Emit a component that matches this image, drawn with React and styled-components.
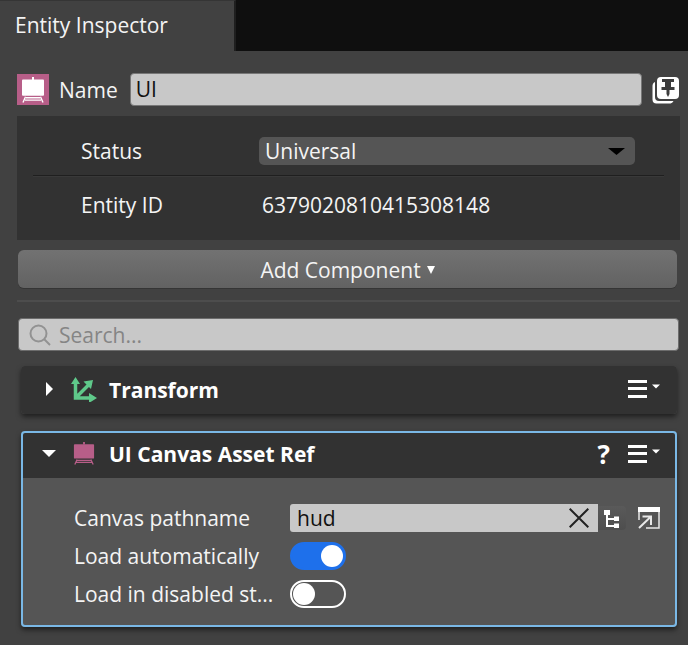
import React, { useState } from "react";
import styled, { createGlobalStyle, css } from "styled-components";

const GlobalStyle = createGlobalStyle`
  *, *::before, *::after { box-sizing: border-box; }
  html, body { margin: 0; min-height: 100%; background: #414141; }
  body, input, select, button {
    font-family: "Open Sans", "Noto Sans", sans-serif;
    font-size: 21px;
    line-height: 28px;
    color: #f4f4f4;
  }
  button { padding: 0; border: 0; background: none; cursor: pointer; }
  svg { display: block; flex: none; }
`;

const TabBar = styled.div`
  display: flex;
  height: 51px;
  background: #0f0f0f;
`;

const Tab = styled.button`
  width: 236px;
  padding: 0 15px 2px;
  text-align: left;
  background: #414141;
  border-top: 1px solid #353535;
  border-right: 2px solid #1f1f1f;
`;

const Panel = styled.main`
  padding: 22px 8px 16px 17px;
`;

const NameRow = styled.div`
  display: flex;
  align-items: center;
  height: 33px;
`;

const EntityIcon = styled.span`
  display: flex;
  align-items: center;
  justify-content: center;
  width: 32px;
  height: 31px;
  background: #b75e88;
`;

const NameLabel = styled.label`
  margin: 0 12px 0 10px;
`;

const NameInput = styled.input`
  flex: 1;
  min-width: 0;
  height: 33px;
  padding: 0 5px 1px;
  color: #111;
  background: #c8c8c8;
  border: 1px solid #777;
  border-radius: 4px;
`;

const PinButton = styled.button`
  margin-left: 10px;
  margin-right: 1px;
  padding-top: 2px;
`;

const StatusPanel = styled.section`
  margin-top: 10px;
  padding: 12px 16px 0;
  height: 124px;
  background: #323232;
`;

const StatusRow = styled.div`
  display: grid;
  grid-template-columns: 178px 1fr;
  align-items: center;
  height: 47px;
  padding: 0 29px 2px 48px;
  & + & {
    height: 58px;
    padding-bottom: 0;
    border-top: 1px solid #1f1f1f;
    box-shadow: inset 0 1px #393939;
  }
`;

const SelectBox = styled.div`
  position: relative;
  svg {
    position: absolute;
    right: 10px;
    top: 11px;
    pointer-events: none;
  }
`;

const StatusSelect = styled.select`
  display: block;
  appearance: none;
  width: 100%;
  height: 28px;
  padding: 0 6px;
  background: #555;
  border: 0;
  border-radius: 5px;
`;

const EntityId = styled.output`
  padding-left: 3px;
`;

const AddButton = styled.button`
  display: flex;
  align-items: center;
  justify-content: center;
  gap: 6px;
  width: calc(100% - 4px);
  height: 38px;
  margin: 10px 0 0 1px;
  padding-top: 2px;
  background: linear-gradient(#727272, #626262);
  border-radius: 6px;
  box-shadow: 0 1px #353535;
`;

const Divider = styled.hr`
  height: 2px;
  margin: 12px 0 0;
  background: #4d4d4d;
  border: 0;
`;

const SearchBox = styled.label`
  display: flex;
  align-items: center;
  gap: 8px;
  height: 33px;
  margin: 16px 1px 0;
  padding: 0 10px;
  color: #929292;
  background: #c8c8c8;
  border: 1px solid #6c6c6c;
  border-radius: 4px;
`;

const SearchInput = styled.input`
  flex: 1;
  min-width: 0;
  padding: 0;
  color: #111;
  background: none;
  border: 0;
  outline: 0;
  &::placeholder { color: #858585; opacity: 1; }
`;

const Card = styled.section`
  margin: 15px 3px 0 4px;
  background: #555;
  border-radius: 4px;
  box-shadow: 0 3px 5px rgba(0, 0, 0, 0.5);
  overflow: hidden;
  & + & { margin-top: 17px; }
  ${({ $selected }) => $selected && css`
    outline: 2px solid #7ab8e6;
    outline-offset: -2px;
  `}
`;

const CardHeader = styled.header`
  display: flex;
  align-items: center;
  height: ${({ $open }) => ($open ? 47 : 48)}px;
  padding: 0 17px 2px 20px;
  background: #323232;
  ${({ $open }) => $open && css`margin: 0 2px; padding: 0 15px 2px 18px;`}
`;

const FoldButton = styled.button`
  display: flex;
  justify-content: center;
  width: 16px;
`;

const CardIcon = styled.span`
  display: flex;
  justify-content: center;
  width: 26px;
  margin: 0 12px 0 14px;
`;

const CardTitle = styled.h2`
  flex: 1;
  margin: 0;
  padding-top: 1px;
  font-size: 21px;
  font-weight: 700;
  line-height: 28px;
  color: #fff;
`;

const HelpButton = styled.button`
  margin-right: 18px;
  font-size: 26px;
  font-weight: 700;
  color: #fff;
`;

const CardBody = styled.div`
  display: grid;
  grid-template-columns: 204px 1fr;
  align-items: center;
  gap: 10px 12px;
  padding: 26px 20px 19px 53px;
`;

const FieldLabel = styled.label`
  white-space: nowrap;
`;

const AssetField = styled.div`
  display: flex;
  align-items: center;
  height: 28px;
`;

const AssetBox = styled.div`
  display: flex;
  flex: 1;
  min-width: 0;
  height: 28px;
  padding-right: 9px;
  background: #c8c8c8;
  border-radius: 3px 0 0 3px;
`;

const AssetInput = styled.input`
  flex: 1;
  min-width: 0;
  padding: 0 7px;
  color: #111;
  background: none;
  border: 0;
`;

const TreeButton = styled.button`
  display: flex;
  justify-content: center;
  width: 28px;
  height: 24px;
  padding-top: 4px;
  background: linear-gradient(#5a5a5a, #4e4e4e);
  border-radius: 0 4px 4px 0;
`;

const OpenButton = styled.button`
  margin-left: 12px;
`;

const Toggle = styled.input`
  appearance: none;
  display: flex;
  align-items: center;
  width: 56px;
  height: 28px;
  margin: 0;
  padding: 0 1px;
  border: 2px solid #fff;
  border-radius: 14px;
  &::before {
    content: "";
    width: 22px;
    height: 22px;
    background: #fff;
    border-radius: 50%;
  }
  &:checked {
    justify-content: flex-end;
    background: #1e70eb;
    border-color: #1e70eb;
  }
`;

const CanvasIcon = ({ color, width, height }) => (
  <svg width={width} height={height} viewBox="0 0 24 27" preserveAspectRatio="none" fill="none" stroke={color}>
    <path d="M12 0v3" strokeWidth="2" />
    <rect x="1" y="2.500" width="22" height="17" rx="1" fill={color} stroke="none" />
    <path d="M5 21.500h14M4 24h16M4.500 20.500l-2.500 6M19.500 20.500l2.500 6" strokeWidth="1.400" />
  </svg>
);

const PinIcon = () => (
  <svg width="27" height="27" viewBox="0 0 27 27">
    <path d="M3 5C1 6 .5 7.500 .5 9v13.500a4 4 0 0 0 4 4H17c2 0 3.500-.5 4.500-2.500H7a4 4 0 0 1-4-4z" fill="#fff" />
    <rect x="5" y="0" width="22" height="22" rx="4" fill="#fff" />
    <path d="M10 2h12v3h-3v5h3.500v3h-5v4L16 20l-1.500-3v-4h-5v-3H13V5h-3z" fill="#3d3d3d" />
  </svg>
);

const Caret = ({ color = "#fff", width = 14, height = 7 }) => (
  <svg width={width} height={height} viewBox="0 0 14 7" preserveAspectRatio="none">
    <path d="M0 0h14L7 7z" fill={color} />
  </svg>
);

const SearchIcon = () => (
  <svg width="22" height="22" viewBox="0 0 22 22" fill="none" stroke="#929292" strokeWidth="2">
    <circle cx="9.500" cy="9.500" r="8" />
    <path d="M15 15l6 6" />
  </svg>
);

const TransformIcon = () => (
  <svg width="26" height="26" viewBox="0 0 26 26" fill="#5fc98a">
    <path d="M0 8L4.500 1 9 8zM18 17l8 5-8 5zM12.500 5.500L22 4l-2 9z" />
    <path d="M4.500 7v15H19M4.500 22L18 8.500" fill="none" stroke="#5fc98a" strokeWidth="3.500" />
  </svg>
);

const MenuIcon = () => (
  <svg width="32" height="18" viewBox="0 0 32 18" fill="#fff">
    <path d="M0 0h19v3H0zM0 7h19v3H0zM0 15h19v3H0zM24 4.500h8l-4 4z" />
  </svg>
);

const CloseIcon = () => (
  <svg width="20" height="20" viewBox="0 0 20 20" fill="none" stroke="#222" strokeWidth="2">
    <path d="M.7.700l18.600 18.600M19.300.700L.7 19.300" />
  </svg>
);

const TreeIcon = () => (
  <svg width="16" height="18" viewBox="0 0 16 18" fill="#fff">
    <path d="M0 0h6v5H4v3h6V6.500h5v4.500h-5v-1H4v5h6v-1.500h5v4.500h-5v-1H2V5H0z" />
  </svg>
);

const OpenIcon = () => (
  <svg width="22" height="22" viewBox="0 0 22 22" fill="none" stroke="#e8e8e8">
    <path d="M1 13V1h20v20H8" strokeWidth="1.500" />
    <path d="M0 2.500h22" stroke="#fff" strokeWidth="5" />
    <path d="M1 21l11.500-11M4.500 9.500h8.500v8.500" strokeWidth="2" />
  </svg>
);

function ComponentHeader({ title, icon, open, help }) {
  return (
    <CardHeader $open={open}>
      <FoldButton aria-label={`Fold ${title}`} aria-expanded={!!open}>
        {open ? <Caret /> : (
          <svg width="7" height="14" viewBox="0 0 7 14"><path d="M0 0l7 7-7 7z" fill="#fff" /></svg>
        )}
      </FoldButton>
      <CardIcon>{icon}</CardIcon>
      <CardTitle>{title}</CardTitle>
      {help && <HelpButton aria-label="Help">?</HelpButton>}
      <button aria-label={`${title} menu`}><MenuIcon /></button>
    </CardHeader>
  );
}

export default function App() {
  const [name, setName] = useState("UI");
  const [path, setPath] = useState("hud");
  return (
    <>
      <GlobalStyle />
      <TabBar role="tablist">
        <Tab role="tab" aria-selected="true">Entity Inspector</Tab>
      </TabBar>
      <Panel>
        <NameRow>
          <EntityIcon><CanvasIcon color="#fff" width={24} height={26} /></EntityIcon>
          <NameLabel htmlFor="name">Name</NameLabel>
          <NameInput id="name" value={name} onChange={(e) => setName(e.target.value)} />
          <PinButton aria-label="Pin inspector"><PinIcon /></PinButton>
        </NameRow>
        <StatusPanel>
          <StatusRow>
            <label htmlFor="status">Status</label>
            <SelectBox>
              <StatusSelect id="status">
                <option>Universal</option>
              </StatusSelect>
              <Caret color="#000" width={17} height={7} />
            </SelectBox>
          </StatusRow>
          <StatusRow>
            <label htmlFor="entity-id">Entity ID</label>
            <EntityId id="entity-id">6379020810415308148</EntityId>
          </StatusRow>
        </StatusPanel>
        <AddButton>Add Component <Caret width={8} height={8} /></AddButton>
        <Divider />
        <SearchBox>
          <SearchIcon />
          <SearchInput type="text" placeholder="Search..." aria-label="Search" />
        </SearchBox>
        <Card>
          <ComponentHeader title="Transform" icon={<TransformIcon />} />
        </Card>
        <Card $selected>
          <ComponentHeader
            title="UI Canvas Asset Ref"
            icon={<CanvasIcon color="#b75e88" width={22} height={23} />}
            open
            help
          />
          <CardBody>
            <FieldLabel htmlFor="path">Canvas pathname</FieldLabel>
            <AssetField>
              <AssetBox>
                <AssetInput id="path" value={path} onChange={(e) => setPath(e.target.value)} />
                <button aria-label="Clear" onClick={() => setPath("")}><CloseIcon /></button>
              </AssetBox>
              <TreeButton aria-label="Browse"><TreeIcon /></TreeButton>
              <OpenButton aria-label="Open in editor"><OpenIcon /></OpenButton>
            </AssetField>
            <FieldLabel htmlFor="auto">Load automatically</FieldLabel>
            <Toggle id="auto" type="checkbox" role="switch" defaultChecked />
            <FieldLabel htmlFor="disabled">Load in disabled st...</FieldLabel>
            <Toggle id="disabled" type="checkbox" role="switch" />
          </CardBody>
        </Card>
      </Panel>
    </>
  );
}
